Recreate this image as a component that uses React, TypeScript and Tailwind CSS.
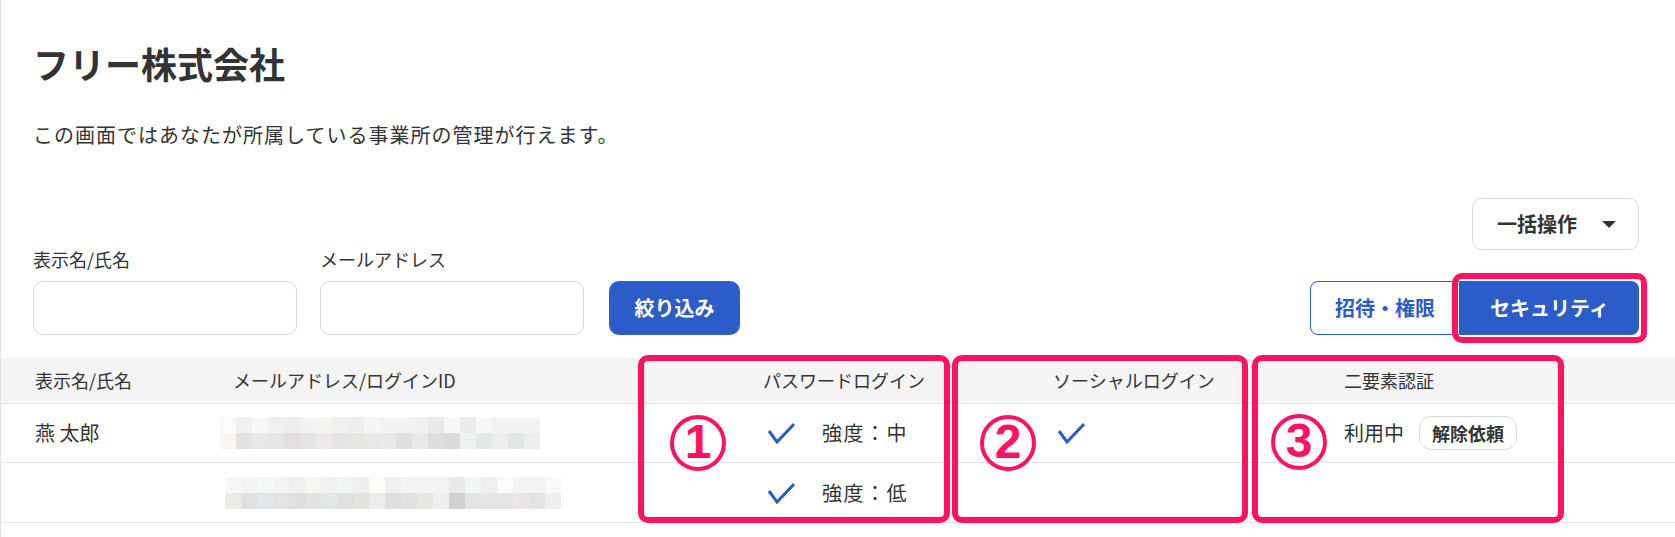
const MOSAIC_1 = {
  top: ['#fafafa', '#f0f0f0', '#f7f7f7', '#efefef', '#eeeeee', '#f2f2f2', '#f4f4f2', '#f0f0f0', '#eeeeee', '#f5f5f5', '#f2f2f2', '#f2f2f2', '#f0f0f0', '#e9e9e9', '#f7f7f7', '#ebebeb', '#f7f7f7', '#f2f2f2', '#f2f2f2', '#f2f2f2'],
  bottom: ['#f7f6f4', '#e2e2e2', '#e8e8e8', '#e6e6e6', '#e1dfe0', '#e4e4e4', '#ebeae8', '#e4e4e6', '#e6e6e4', '#e8e8e8', '#e9e9e9', '#dfdfdf', '#e9e9e9', '#dddddd', '#dadada', '#eff0f0', '#e5e7e7', '#eeeeee', '#e3e5e4', '#eeeeee'],
}

const MOSAIC_2 = {
  top: ['#f7f7f7', '#f4f4f4', '#f5f6f6', '#f3f3f3', '#efeff0', '#f6f6f4', '#f1f1f1', '#f2f4f4', '#eeeeee', '#fcfcfa', '#f0f0f0', '#f3f3f3', '#f3f3f3', '#f3f3f3', '#e9e9e9', '#f3f5f5', '#efefed', '#fafafa', '#f3f3f3', '#f3f3f3', '#f9f9f9'],
  bottom: ['#ebeae8', '#e0e0e0', '#e5e6ea', '#e3e3e3', '#e0dfe0', '#e3e2e0', '#e5e6e8', '#e0e0e0', '#e3e2e0', '#ececec', '#dfdfdf', '#e1e1e1', '#e8e7e5', '#eeeeee', '#d0d0d0', '#e4e4e4', '#e5e5e7', '#e5e5e5', '#e8e7e5', '#e4e4e6', '#eeeeee'],
}

function Mosaic({ top, bottom }: { top: string[]; bottom: string[] }) {
  return (
    <div className="flex flex-col">
      <div className="flex">
        {top.map((c, i) => (
          <div key={i} className="h-4 w-4" style={{ backgroundColor: c }} />
        ))}
      </div>
      <div className="flex">
        {bottom.map((c, i) => (
          <div key={i} className="h-4 w-4" style={{ backgroundColor: c }} />
        ))}
      </div>
    </div>
  )
}

function Check() {
  return (
    <svg width="28" height="22" viewBox="0 0 28 22" fill="none" className="shrink-0">
      <polyline points="2,9 10,20 27,2" stroke="#2b5cc8" strokeWidth="3" />
    </svg>
  )
}

function Circled({ n, className }: { n: string; className: string }) {
  return (
    <div
      className={`absolute flex h-[56px] w-[56px] items-center justify-center rounded-full border-[4px] border-[#fe1261] font-['Liberation_Sans',sans-serif] text-[48px] font-bold leading-none text-[#fe1261] ${className}`}
    >
      <span className="-mt-[2px]">{n}</span>
    </div>
  )
}

export default function App() {
  return (
    <div className="h-[537px] w-[1675px] overflow-hidden border-l border-[#e2e2e2] bg-white font-['Noto_Sans_CJK_JP','Noto_Sans',sans-serif] text-[#333333]">
      <div className="pl-8 pr-9 pt-[37px]">
        <h1 className="text-[36px] font-bold leading-[52px]">フリー株式会社</h1>
        <p className="mt-[31px] text-[20px] leading-[30px] tracking-[1px]">この画面ではあなたが所属している事業所の管理が行えます。</p>

        <div className="mt-[48px] flex items-end justify-between">
          <div className="flex items-end">
            <div className="flex flex-col">
              <label className="mb-2 text-[18px] leading-[27px]">表示名/氏名</label>
              <input className="h-[54px] w-[264px] rounded-[10px] border border-[#d9d9d9] bg-white" />
            </div>
            <div className="ml-[23px] flex flex-col">
              <label className="mb-2 text-[18px] leading-[27px]">メールアドレス</label>
              <input className="h-[54px] w-[264px] rounded-[10px] border border-[#d9d9d9] bg-white" />
            </div>
            <button className="ml-[25px] flex h-[54px] w-[131px] items-center justify-center rounded-[10px] bg-[#2b5cc8] text-[20px] font-bold text-white">
              絞り込み
            </button>
          </div>

          <div className="flex flex-col items-end gap-[31px]">
            <button className="flex h-[52px] w-[167px] items-center rounded-[10px] border border-[#d9d9d9] bg-white pl-[24px] text-[20px] font-bold">
              一括操作
              <span className="ml-[25px] h-0 w-0 border-x-[7px] border-t-[7px] border-x-transparent border-t-[#333333]" />
            </button>
            <div className="flex">
              <button className="flex h-[54px] w-[150px] items-center justify-center rounded-l-[8px] border border-[#2b5cc8] bg-white text-[20px] font-bold text-[#2b5cc8]">
                招待・権限
              </button>
              <div className="relative">
                <button className="flex h-[54px] w-[179px] items-center justify-center rounded-r-[8px] bg-[#2b5cc8] text-[20px] font-bold text-white">
                  セキュリティ
                </button>
                <div className="pointer-events-none absolute -inset-[8px] rounded-[10px] border-[6px] border-[#fe1261]" />
              </div>
            </div>
          </div>
        </div>
      </div>

      <div className="relative mt-[23px]">
        <div className="grid h-[46px] grid-cols-[216px_530px_290px_291px_1fr] items-center border-b border-[#e4e4e4] bg-[#f5f4f5] text-[18px]">
          <div className="pl-[34px]">表示名/氏名</div>
          <div className="pl-4">メールアドレス/ログインID</div>
          <div className="pl-4">パスワードログイン</div>
          <div className="pl-4">ソーシャルログイン</div>
          <div className="pl-4">二要素認証</div>
        </div>

        <div className="grid h-[59px] grid-cols-[216px_530px_290px_291px_1fr] items-center border-b border-[#e4e4e4] text-[20px]">
          <div className="pl-[34px]">燕 太郎</div>
          <div className="pl-[3px]">
            <Mosaic {...MOSAIC_1} />
          </div>
          <div className="flex items-center pl-5">
            <Check />
            <span className="ml-[27px] tracking-[1.5px]">強度：中</span>
          </div>
          <div className="flex items-center pl-5">
            <Check />
          </div>
          <div className="flex items-center pl-4">
            <span>利用中</span>
            <span className="ml-[15px] flex h-[34px] items-center rounded-[12px] border border-[#d9d9d9] px-3 text-[18px] font-bold">
              解除依頼
            </span>
          </div>
        </div>

        <div className="grid h-[60px] grid-cols-[216px_530px_290px_291px_1fr] items-center border-b border-[#e4e4e4] text-[20px]">
          <div />
          <div className="pl-[8px]">
            <Mosaic {...MOSAIC_2} />
          </div>
          <div className="flex items-center pl-5">
            <Check />
            <span className="ml-[27px] tracking-[1.5px]">強度：低</span>
          </div>
          <div />
          <div />
        </div>

        <div className="pointer-events-none absolute left-[637px] top-[-3px] h-[168px] w-[312px] rounded-[10px] border-[6px] border-[#fe1261]" />
        <div className="pointer-events-none absolute left-[951px] top-[-3px] h-[168px] w-[296px] rounded-[10px] border-[6px] border-[#fe1261]" />
        <div className="pointer-events-none absolute left-[1251px] top-[-3px] h-[168px] w-[312px] rounded-[10px] border-[6px] border-[#fe1261]" />

        <Circled n="1" className="left-[669px] top-[57px]" />
        <Circled n="2" className="left-[979px] top-[57px]" />
        <Circled n="3" className="left-[1270px] top-[56px]" />
      </div>
    </div>
  )
}
